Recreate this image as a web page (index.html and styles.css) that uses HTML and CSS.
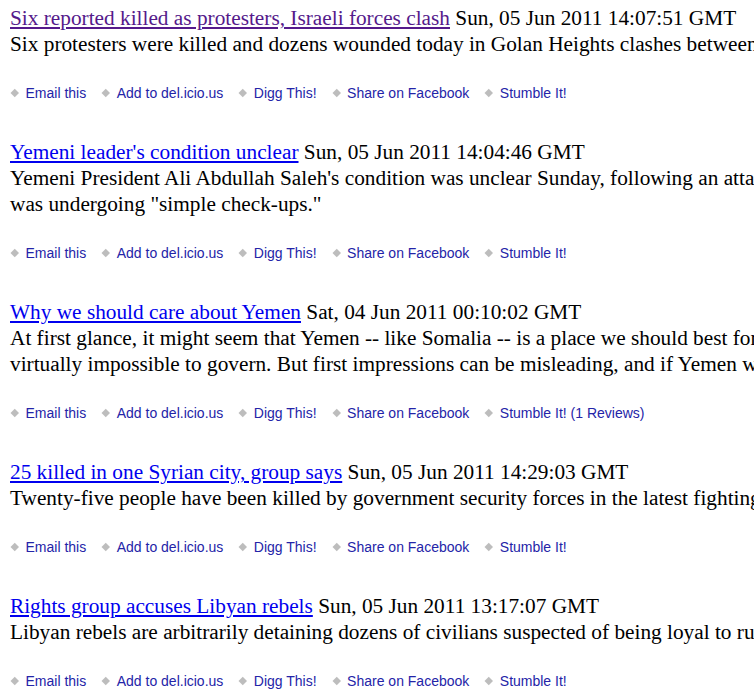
FILE: index.html
```html
<!DOCTYPE html>
<html>
<head>
<meta charset="utf-8">
<title>News</title>
<link rel="stylesheet" href="styles.css">
</head>
<body>
<div class="feed">
  <div class="item">
    <p class="text"><a class="title visited" href="#">Six reported killed as protesters, Israeli forces clash</a> Sun, 05 Jun 2011 14:07:51 GMT<br>Six protesters were killed and dozens wounded today in Golan Heights clashes between Israeli forces and protesters.</p>
    <ul class="share">
      <li><a href="#">Email this</a></li>
      <li><a href="#">Add to del.icio.us</a></li>
      <li><a href="#">Digg This!</a></li>
      <li><a href="#">Share on Facebook</a></li>
      <li><a href="#">Stumble It!</a></li>
    </ul>
  </div>
  <div class="item">
    <p class="text"><a class="title" href="#">Yemeni leader's condition unclear</a> Sun, 05 Jun 2011 14:04:46 GMT<br>Yemeni President Ali Abdullah Saleh's condition was unclear Sunday, following an attack on his palace; officials said he<br>was undergoing "simple check-ups."</p>
    <ul class="share">
      <li><a href="#">Email this</a></li>
      <li><a href="#">Add to del.icio.us</a></li>
      <li><a href="#">Digg This!</a></li>
      <li><a href="#">Share on Facebook</a></li>
      <li><a href="#">Stumble It!</a></li>
    </ul>
  </div>
  <div class="item">
    <p class="text"><a class="title" href="#">Why we should care about Yemen</a> Sat, 04 Jun 2011 00:10:02 GMT<br>At first glance, it might seem that Yemen -- like Somalia -- is a place we should best forget about, a country that is<br>virtually impossible to govern. But first impressions can be misleading, and if Yemen were to collapse entirely.</p>
    <ul class="share">
      <li><a href="#">Email this</a></li>
      <li><a href="#">Add to del.icio.us</a></li>
      <li><a href="#">Digg This!</a></li>
      <li><a href="#">Share on Facebook</a></li>
      <li><a href="#">Stumble It! (1 Reviews)</a></li>
    </ul>
  </div>
  <div class="item">
    <p class="text"><a class="title" href="#">25 killed in one Syrian city, group says</a> Sun, 05 Jun 2011 14:29:03 GMT<br>Twenty-five people have been killed by government security forces in the latest fighting in the city.</p>
    <ul class="share">
      <li><a href="#">Email this</a></li>
      <li><a href="#">Add to del.icio.us</a></li>
      <li><a href="#">Digg This!</a></li>
      <li><a href="#">Share on Facebook</a></li>
      <li><a href="#">Stumble It!</a></li>
    </ul>
  </div>
  <div class="item">
    <p class="text"><a class="title" href="#">Rights group accuses Libyan rebels</a> Sun, 05 Jun 2011 13:17:07 GMT<br>Libyan rebels are arbitrarily detaining dozens of civilians suspected of being loyal to rulers.</p>
    <ul class="share">
      <li><a href="#">Email this</a></li>
      <li><a href="#">Add to del.icio.us</a></li>
      <li><a href="#">Digg This!</a></li>
      <li><a href="#">Share on Facebook</a></li>
      <li><a href="#">Stumble It!</a></li>
    </ul>
  </div>
</div>
</body>
</html>
```
FILE: styles.css
```css
html {
  overflow: hidden;
}
body {
  margin: 0;
  padding: 5px 0 0 10px;
  background: #fff;
  color: #000;
  font-family: "Liberation Serif", "Times New Roman", serif;
  font-size: 21.3px;
}
.feed {
  width: 1100px;
}
.item {
  margin-bottom: 36px;
}
.text {
  margin: 0;
  line-height: 26px;
  white-space: nowrap;
}
.title {
  color: #0000ee;
  text-decoration: underline;
}
.title.visited {
  color: #551a8b;
}
.share {
  list-style: none;
  margin: 26px 0 0 0;
  padding: 0;
  display: flex;
  gap: 15px;
  height: 20px;
  align-items: center;
  font-family: "Liberation Sans", Arial, sans-serif;
  font-size: 14px;
  line-height: 20px;
}
.share li {
  display: flex;
  align-items: center;
  gap: 8px;
}
.share li::before {
  content: "";
  width: 5.5px;
  height: 5.5px;
  margin-left: 2px;
  background: #bdbdbd;
  transform: rotate(45deg);
}
.share a {
  color: #2424a8;
  text-decoration: none;
}
```
